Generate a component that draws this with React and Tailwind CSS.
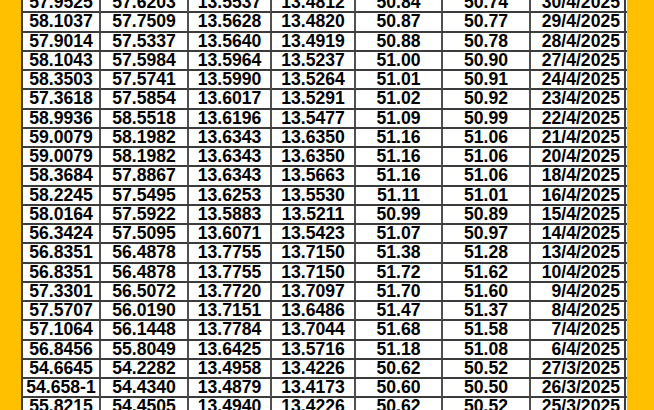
import React from 'react';

const rows = [
    ['57.9525', '57.6203', '13.5537', '13.4812', '50.84', '50.74', '30/4/2025'],
    ['58.1037', '57.7509', '13.5628', '13.4820', '50.87', '50.77', '29/4/2025'],
    ['57.9014', '57.5337', '13.5640', '13.4919', '50.88', '50.78', '28/4/2025'],
    ['58.1043', '57.5984', '13.5964', '13.5237', '51.00', '50.90', '27/4/2025'],
    ['58.3503', '57.5741', '13.5990', '13.5264', '51.01', '50.91', '24/4/2025'],
    ['57.3618', '57.5854', '13.6017', '13.5291', '51.02', '50.92', '23/4/2025'],
    ['58.9936', '58.5518', '13.6196', '13.5477', '51.09', '50.99', '22/4/2025'],
    ['59.0079', '58.1982', '13.6343', '13.6350', '51.16', '51.06', '21/4/2025'],
    ['59.0079', '58.1982', '13.6343', '13.6350', '51.16', '51.06', '20/4/2025'],
    ['58.3684', '57.8867', '13.6343', '13.5663', '51.16', '51.06', '18/4/2025'],
    ['58.2245', '57.5495', '13.6253', '13.5530', '51.11', '51.01', '16/4/2025'],
    ['58.0164', '57.5922', '13.5883', '13.5211', '50.99', '50.89', '15/4/2025'],
    ['56.3424', '57.5095', '13.6071', '13.5423', '51.07', '50.97', '14/4/2025'],
    ['56.8351', '56.4878', '13.7755', '13.7150', '51.38', '51.28', '13/4/2025'],
    ['56.8351', '56.4878', '13.7755', '13.7150', '51.72', '51.62', '10/4/2025'],
    ['57.3301', '56.5072', '13.7720', '13.7097', '51.70', '51.60', '9/4/2025'],
    ['57.5707', '56.0190', '13.7151', '13.6486', '51.47', '51.37', '8/4/2025'],
    ['57.1064', '56.1448', '13.7784', '13.7044', '51.68', '51.58', '7/4/2025'],
    ['56.8456', '55.8049', '13.6425', '13.5716', '51.18', '51.08', '6/4/2025'],
    ['54.6645', '54.2282', '13.4958', '13.4226', '50.62', '50.52', '27/3/2025'],
    ['54.658-1', '54.4340', '13.4879', '13.4173', '50.60', '50.50', '26/3/2025'],
    ['55.8215', '54.4505', '13.4940', '13.4226', '50.62', '50.52', '25/3/2025'],
];

function App() {
    return (
        <div className="w-[654px] h-[410px] overflow-hidden bg-[#FFC000] flex">
            <div className="w-[21px] shrink-0" />

            {/* rate table */}
            <div className="w-[606px] shrink-0 bg-white border-l-2 border-[#3c3c3c] -mt-[6px] font-['Liberation_Sans',Arial,sans-serif] font-bold text-[17.6px] text-black">
                {rows.map((row, i) => (
                    <div
                        key={i}
                        className="grid grid-cols-[78px_88px_83px_84px_87px_88px_95px] h-[19.25px] border-b-2 border-[#3c3c3c]"
                    >
                        {row.map((cell, j) => (
                            <div
                                key={j}
                                className={
                                    j === 6
                                        ? 'flex items-center justify-end pr-[4px] border-r-2 border-[#3c3c3c] leading-none'
                                        : 'flex items-center justify-center border-r-2 border-[#505050] leading-none'
                                }
                            >
                                {cell}
                            </div>
                        ))}
                    </div>
                ))}
            </div>

            <div className="flex-1" />
        </div>
    );
}

export default App;
